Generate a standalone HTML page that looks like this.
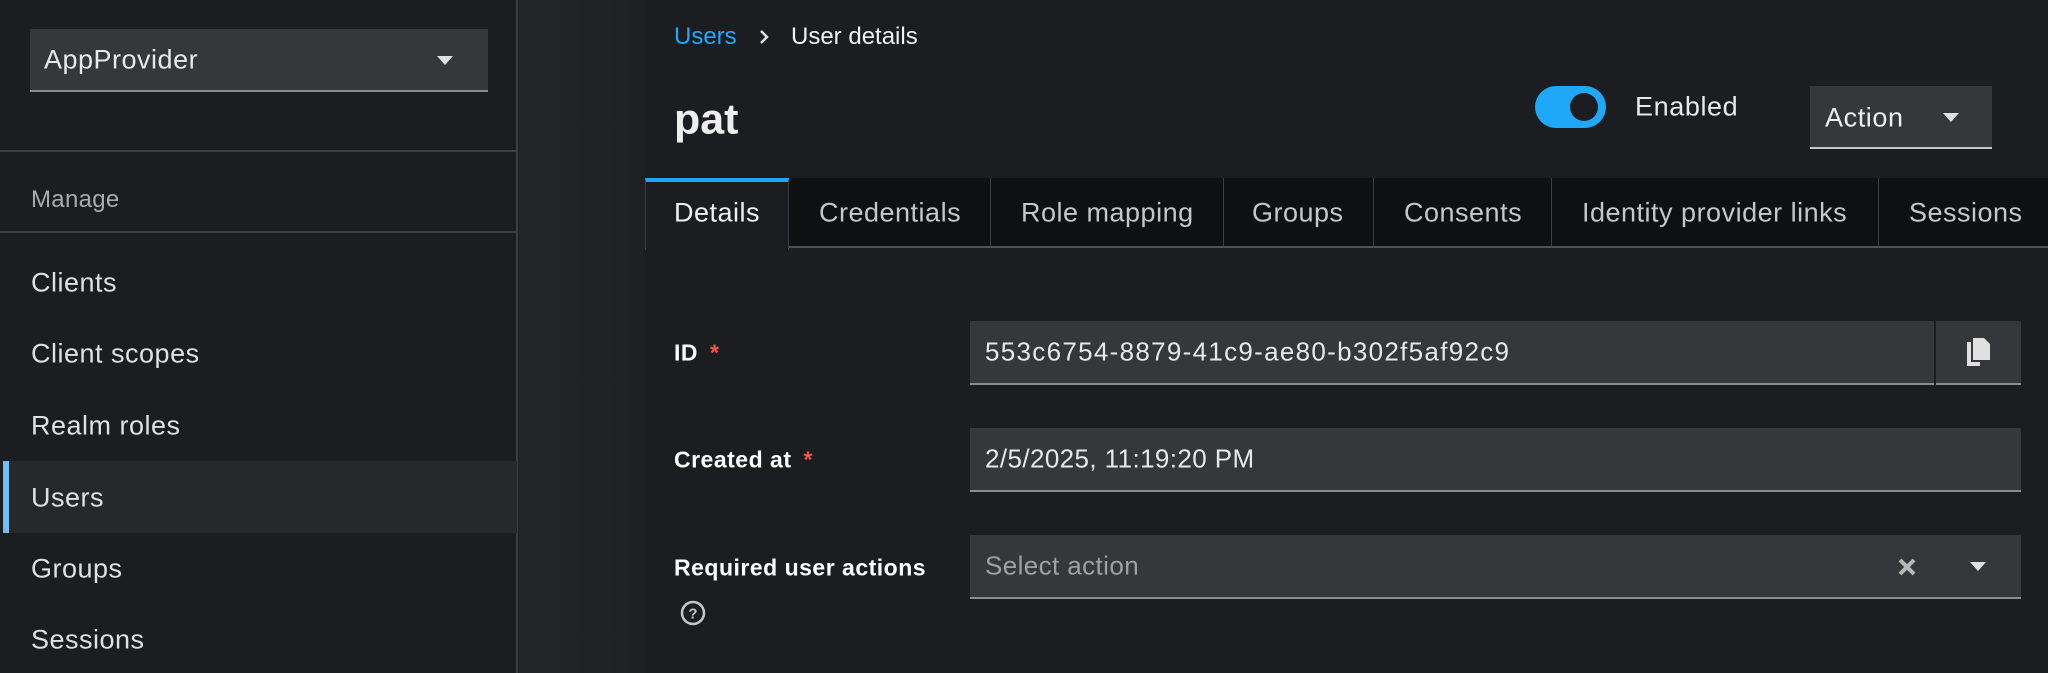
<!DOCTYPE html>
<html><head><meta charset="utf-8"><style>
*{margin:0;padding:0;box-sizing:border-box}
body{width:2048px;height:673px;overflow:hidden;background:#1b1d21;font-family:"Liberation Sans",sans-serif;color:#e0e0e0;position:relative}
.a{position:absolute;white-space:nowrap}
.side{left:0;top:0;width:518px;height:673px;background:#1b1d21;border-right:2px solid #3c3f42}
.gap{left:519px;top:0;width:126px;height:673px;background:linear-gradient(90deg,#232529,#1e2024)}
.inp{background:#36373b;border-bottom:2px solid #8a8d90}
.nav{left:31px;font-size:27px;letter-spacing:0.5px;color:#e0e0e0;transform:translateY(-50%)}
.tab{top:178px;height:70px;background:#0f1012;border-right:1px solid #3c3f42;border-bottom:2px solid #4f5255}
.tl{top:213px;transform:translateY(-50%);font-size:27px;letter-spacing:0.5px;color:#c7c7c7}
.lbl{left:674px;font-size:23px;letter-spacing:0.5px;font-weight:bold;color:#fff;transform:translateY(-50%)}
.req{color:#fe5142;margin-left:12px}
.val{left:985px;font-size:26px;letter-spacing:0.4px;transform:translateY(-50%)}
</style></head><body>
<div class="a side"></div>
<div class="a gap"></div>
<div class="a inp" style="left:30px;top:29px;width:458px;height:63px"></div>
<div class="a" style="left:44px;top:60px;transform:translateY(-50%);font-size:27px;letter-spacing:0.5px;color:#e8e8e8">AppProvider</div>
<svg class="a" style="left:437px;top:56px" width="16" height="9"><path d="M0 0H16L8 9Z" fill="#e0e0e0"/></svg>
<div class="a" style="left:0;top:150px;width:517px;height:2px;background:#3c3f42"></div>
<div class="a" style="left:31px;top:200px;transform:translateY(-50%);font-size:24px;letter-spacing:0.3px;color:#aaabac">Manage</div>
<div class="a" style="left:0;top:231px;width:517px;height:2px;background:#3c3f42"></div>
<div class="a" style="left:3px;top:461px;width:514px;height:72px;background:#26282c"></div>
<div class="a" style="left:3px;top:461px;width:6px;height:72px;background:#73bcf7"></div>
<div class="a nav" style="top:283px">Clients</div>
<div class="a nav" style="top:354px">Client scopes</div>
<div class="a nav" style="top:426px">Realm roles</div>
<div class="a nav" style="top:498px">Users</div>
<div class="a nav" style="top:569px">Groups</div>
<div class="a nav" style="top:640px">Sessions</div>

<div class="a" style="left:674px;top:37px;transform:translateY(-50%);font-size:24px;color:#1fa7f8">Users</div>
<svg class="a" style="left:759px;top:29px" width="10" height="16"><path d="M2 2L8 8L2 14" stroke="#e0e0e0" stroke-width="2.5" fill="none"/></svg>
<div class="a" style="left:791px;top:37px;transform:translateY(-50%);font-size:24px;color:#f0f0f0">User details</div>
<div class="a" style="left:674px;top:120px;transform:translateY(-50%);font-size:43px;font-weight:bold;color:#eee">pat</div>
<div class="a" style="left:1535px;top:86px;width:71px;height:42px;border-radius:21px;background:#1fa7f8"></div>
<div class="a" style="left:1570px;top:93px;width:28px;height:28px;border-radius:50%;background:#1b1d21"></div>
<div class="a" style="left:1635px;top:107px;transform:translateY(-50%);font-size:27px;letter-spacing:0.6px;color:#e8e8e8">Enabled</div>
<div class="a" style="left:1810px;top:86px;width:182px;height:63px;background:#36373b;border-bottom:2px solid #c7c7c7"></div>
<div class="a" style="left:1825px;top:118px;transform:translateY(-50%);font-size:27px;letter-spacing:0.6px;color:#eee">Action</div>
<svg class="a" style="left:1943px;top:113px" width="16" height="9"><path d="M0 0H16L8 9Z" fill="#e0e0e0"/></svg>

<div class="a" style="left:645px;top:178px;width:1403px;height:70px;background:#0f1012;border-bottom:2px solid #4f5255"></div>
<div class="a" style="left:645px;top:178px;width:144px;height:72px;background:#1b1d21;border-top:4px solid #1fa7f8;border-right:1px solid #3c3f42;border-left:1px solid #3c3f42"></div>
<div class="a tab" style="left:789px;width:202px"></div>
<div class="a tab" style="left:991px;width:233px"></div>
<div class="a tab" style="left:1224px;width:150px"></div>
<div class="a tab" style="left:1374px;width:178px"></div>
<div class="a tab" style="left:1552px;width:327px"></div>
<div class="a tl" style="left:674px;color:#f0f0f0">Details</div>
<div class="a tl" style="left:819px">Credentials</div>
<div class="a tl" style="left:1021px">Role mapping</div>
<div class="a tl" style="left:1252px">Groups</div>
<div class="a tl" style="left:1404px">Consents</div>
<div class="a tl" style="left:1582px">Identity provider links</div>
<div class="a tl" style="left:1909px">Sessions</div>

<div class="a lbl" style="top:353px">ID<span class="req">*</span></div>
<div class="a inp" style="left:970px;top:321px;width:964px;height:64px"></div>
<div class="a inp" style="left:1936px;top:321px;width:85px;height:64px"></div>
<div class="a val" style="top:352px;color:#e8e8e8;letter-spacing:1.3px">553c6754-8879-41c9-ae80-b302f5af92c9</div>
<svg class="a" style="left:1965px;top:337px" width="26" height="30"><path d="M6 5H2V29H15V25H6Z" fill="#e0e0e0"/><path d="M8 1H19L25 7V23H8Z" fill="#e0e0e0"/></svg>
<div class="a lbl" style="top:460px">Created at<span class="req">*</span></div>
<div class="a inp" style="left:970px;top:428px;width:1051px;height:64px"></div>
<div class="a val" style="top:459px;color:#e8e8e8">2/5/2025, 11:19:20 PM</div>
<div class="a lbl" style="top:568px">Required user actions</div>
<svg class="a" style="left:680px;top:600px" width="26" height="26"><circle cx="13" cy="13" r="11" stroke="#c7c7c7" stroke-width="2.5" fill="none"/><text x="13" y="18.5" text-anchor="middle" font-size="15" font-weight="bold" fill="#c7c7c7" font-family="Liberation Sans">?</text></svg>
<div class="a inp" style="left:970px;top:535px;width:1051px;height:64px"></div>
<div class="a val" style="top:566px;color:#a0a0a2">Select action</div>
<svg class="a" style="left:1897px;top:557px" width="20" height="20"><path d="M3 3L17 17M17 3L3 17" stroke="#b8b8b8" stroke-width="4"/></svg>
<svg class="a" style="left:1970px;top:562px" width="16" height="9"><path d="M0 0H16L8 9Z" fill="#e0e0e0"/></svg>
</body></html>
